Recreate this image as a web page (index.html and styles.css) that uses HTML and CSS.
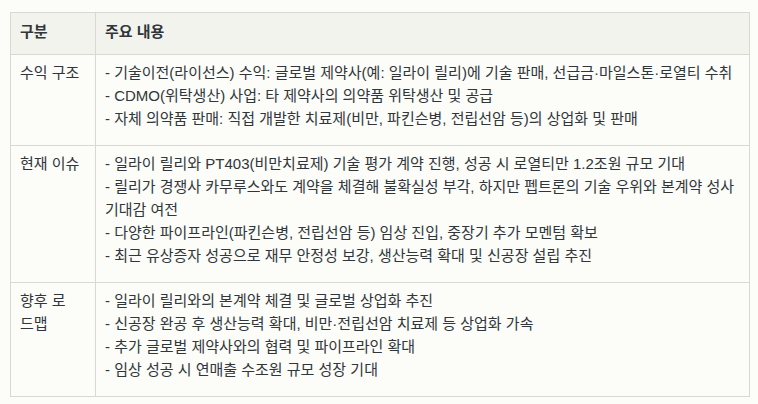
FILE: index.html
```html
<!DOCTYPE html>
<html lang="ko">
<head>
<meta charset="utf-8">
<link rel="stylesheet" href="styles.css">
</head>
<body>
<table class="info">
  <thead>
    <tr><th class="c1">구분</th><th class="c2">주요 내용</th></tr>
  </thead>
  <tbody>
    <tr>
      <td class="c1">수익 구조</td>
      <td class="c2">- 기술이전(라이선스) 수익: 글로벌 제약사(예: 일라이 릴리)에 기술 판매, 선급금·마일스톤·로열티 수취<br>- CDMO(위탁생산) 사업: 타 제약사의 의약품 위탁생산 및 공급<br>- 자체 의약품 판매: 직접 개발한 치료제(비만, 파킨슨병, 전립선암 등)의 상업화 및 판매</td>
    </tr>
    <tr>
      <td class="c1">현재 이슈</td>
      <td class="c2">- 일라이 릴리와 PT403(비만치료제) 기술 평가 계약 진행, 성공 시 로열티만 1.2조원 규모 기대<br>- 릴리가 경쟁사 카무루스와도 계약을 체결해 불확실성 부각, 하지만 펩트론의 기술 우위와 본계약 성사 기대감 여전<br>- 다양한 파이프라인(파킨슨병, 전립선암 등) 임상 진입, 중장기 추가 모멘텀 확보<br>- 최근 유상증자 성공으로 재무 안정성 보강, 생산능력 확대 및 신공장 설립 추진</td>
    </tr>
    <tr>
      <td class="c1">향후 로<br>드맵</td>
      <td class="c2">- 일라이 릴리와의 본계약 체결 및 글로벌 상업화 추진<br>- 신공장 완공 후 생산능력 확대, 비만·전립선암 치료제 등 상업화 가속<br>- 추가 글로벌 제약사와의 협력 및 파이프라인 확대<br>- 임상 성공 시 연매출 수조원 규모 성장 기대</td>
    </tr>
  </tbody>
</table>
</body>
</html>
```
FILE: styles.css
```css
html, body {
  margin: 0;
  background: #fcfcf9;
}
body {
  padding: 12px 8px 0 10px;
  font-family: "Liberation Sans", "Noto Sans CJK KR", sans-serif;
  font-size: 15px;
  color: #30363a;
}
.info {
  width: 740px;
  border-collapse: collapse;
  table-layout: fixed;
  background: #fcfcf9;
}
.info th, .info td {
  border: 1px solid #d9d9d4;
  padding: 6px 8px 15px 9px;
  line-height: 23px;
  text-align: left;
  vertical-align: top;
}
.info th {
  background: #f3f3ee;
  font-weight: 600;
  padding-top: 7px;
  padding-bottom: 11px;
}
.info .c1 {
  width: 85px;
  box-sizing: border-box;
}
```
